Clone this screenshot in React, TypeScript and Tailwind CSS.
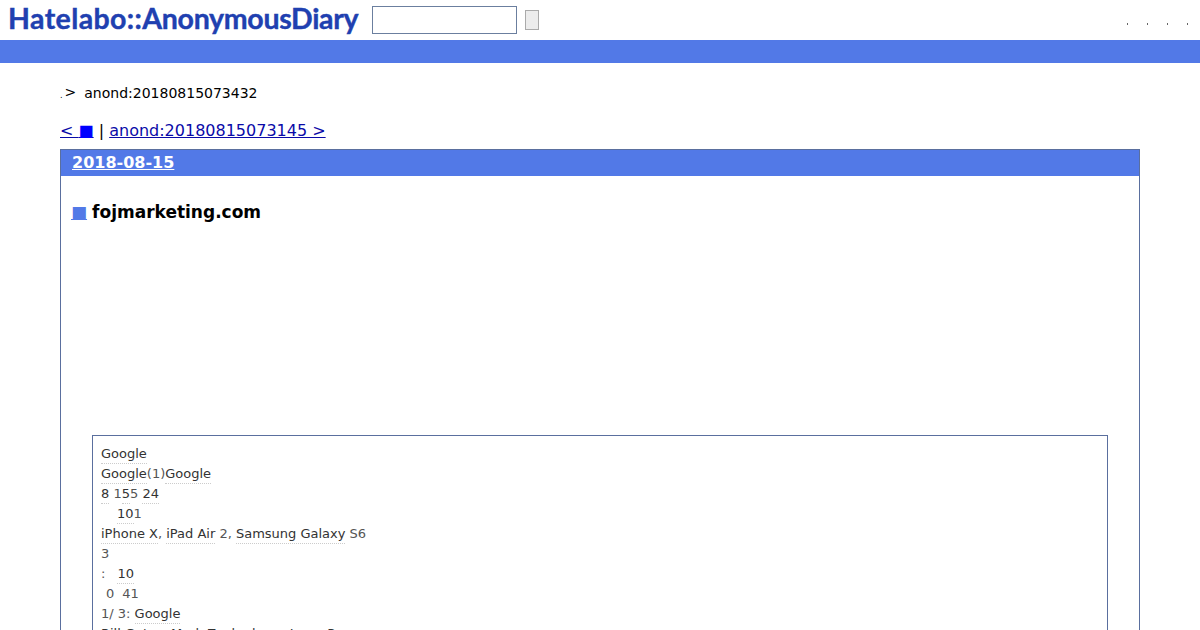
const dejavu = "font-['DejaVu_Sans',sans-serif]"

function Kw({ children }: { children: React.ReactNode }) {
  return <span className="text-[#333] border-b border-dotted border-[#ccc] pb-[2px]">{children}</span>
}

export default function App() {
  return (
    <div className={`${dejavu} h-[630px] overflow-hidden bg-white text-black`}>
      <header className="flex h-10 items-center pl-2">
        <div className="w-[364px] -mt-[3px] font-['Lato',sans-serif] text-[28.5px] font-bold leading-none text-[#2040b0] [-webkit-text-stroke:0.4px_#2040b0]">
          <span className="tracking-[0.4px]">Hatelabo::</span>
          <span className="tracking-[-0.3px]">AnonymousDiary</span>
        </div>
        <input className="h-[28px] w-[145px] border border-[#6b7f9f] bg-white" />
        <button className="ml-2 h-5 w-[14px] border border-[#aaa] bg-[#ececec]" />
        <div className="ml-auto flex gap-[19px] pr-[12px] pt-[8px]">
          <span className="h-[2px] w-px bg-[#666]" />
          <span className="h-[2px] w-px bg-[#666]" />
          <span className="h-[2px] w-px bg-[#666]" />
          <span className="h-[2px] w-px bg-[#666]" />
        </div>
      </header>
      <div className="h-[23px] bg-[#5279e7]" />

      <main className="px-[60px]">
        <div className="mt-[22px] flex items-baseline text-sm leading-4">
          <span className="text-[8px]">.</span>
          <span className="ml-[2px] -translate-y-px">&gt;</span>
          <span className="ml-2">anond:20180815073432</span>
        </div>
        <div className="mt-[17px] h-[19px] text-base leading-[19px]">
          <a href="#" className="text-[#0a0aa8] underline">
            &lt; <span className="text-[#0000ff]">■</span>
          </a>
          {' | '}
          <a href="#" className="text-[#0a0aa8] underline">anond:20180815073145 &gt;</a>
        </div>

        <section className="mt-[9px] h-[600px] border border-[#5a6f9e]">
          <h2 className="h-[26px] bg-[#5279e7] pl-[11px] text-base font-bold leading-[26px] text-white">
            <a href="#" className="underline">2018-08-15</a>
          </h2>
          <h3 className="mt-[26px] flex h-5 items-center pl-[10px] text-[17px] font-bold leading-5">
            <a href="#" className="text-[#5279e7] underline">■</a>
            <span className="ml-[5px]">fojmarketing.com</span>
          </h3>
          <div className="mx-[31px] mt-[213px] border border-[#5a6f9e] px-2 pt-2 text-[13px] leading-5 text-[#555]">
            <p><Kw>Google</Kw></p>
            <p><Kw>Google</Kw>(1)<Kw>Google</Kw></p>
            <p><Kw>8</Kw> 1<Kw>5</Kw>5 <Kw>24</Kw></p>
            <p className="pl-4"><Kw>10</Kw>1</p>
            <p><Kw>iPhone X</Kw>, <Kw>iPad Air</Kw> 2, <Kw>Samsung Galaxy</Kw> S6</p>
            <p>3</p>
            <p>:<span className="ml-3"><Kw>10</Kw></span></p>
            <p className="pl-[5px]">0<span className="ml-2">41</span></p>
            <p>1/ 3: <Kw>Google</Kw></p>
            <p><Kw>Bill Gates</Kw>, <Kw>Mark Zuckerberg</Kw>, <Kw>Larry Page</Kw></p>
          </div>
        </section>
      </main>
    </div>
  )
}
